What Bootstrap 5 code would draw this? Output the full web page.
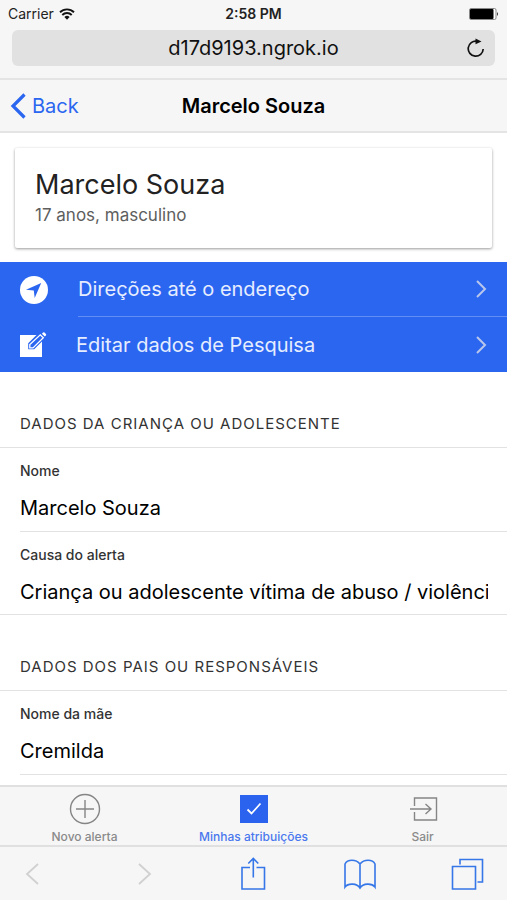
<!DOCTYPE html>
<html lang="pt-BR">
<head>
<meta charset="utf-8">
<meta name="viewport" content="width=device-width, initial-scale=1">
<title>Marcelo Souza</title>
<link href="https://cdn.jsdelivr.net/npm/bootstrap@5.3.0/dist/css/bootstrap.min.css" rel="stylesheet">
<style>
  :root { --brand: #2b66f0; --chrome: #f6f6f6; --hairline: #e2e2e2; }
  body { font-family: Inter, "Liberation Sans", sans-serif; color: #111; }
  svg { display: block; flex: none; }
  button { font-family: inherit; }
  .chrome { background: var(--chrome); }
  .status { height: 28px; font-size: 14px; line-height: 28px; padding: 0 8px; color: #222; }
  .address { height: 36px; background: #e1e1e1; border-radius: 6px; font-size: 20px; line-height: 36px; margin: 2px 12px 12px; padding: 0 10px; }
  .page-head { height: 55px; border-top: 2px solid #e4e4e4; border-bottom: 2px solid #e4e4e4; padding: 0 10px; }
  .page-head h1 { font-size: 20px; line-height: 24px; color: #000; }
  .back { color: var(--brand); font-size: 20px; line-height: 24px; gap: 6px; }
  .profile { margin: 15px 15px 14px; padding: 20px; height: 100px; border-radius: 2px; box-shadow: 0 1px 3px rgba(0, 0, 0, .4); }
  .profile h2 { font-size: 27px; line-height: 34px; color: #222; }
  .profile p { font-size: 17px; line-height: 26px; color: #5e5e5e; }
  .actions { background: var(--brand); }
  .actions a { color: #e6edff; font-size: 20px; padding-left: 20px; height: 55px; }
  .actions .glyph { width: 58px; }
  .actions .edit .glyph { width: 56px; }
  .actions .text { padding-right: 20px; }
  .actions .ruled { border-bottom: 1px solid #628df5; }
  .group-title { height: 75px; padding: 40px 20px 0; font-size: 15px; line-height: 24px; letter-spacing: 1px; color: #333; }
  .fields { border-top: 1px solid var(--hairline); border-bottom: 1px solid var(--hairline); padding-left: 20px; }
  .field { height: 83px; padding: 13px 19px 0 0; }
  .field + .field { border-top: 1px solid var(--hairline); }
  .field label { font-size: 14px; line-height: 20px; font-weight: 500; color: #333; }
  .field input { font-size: 20px; line-height: 30px; height: 30px; margin-top: 12px; color: #000; outline: 0; }
  .open-end { border-bottom: 0; }
  .open-end .field { border-bottom: 1px solid var(--hairline); height: 84px; }
  .tabs { height: 60px; border-top: 2px solid #e0e0e0; }
  .tabs a { color: #8a8a8a; font-size: 12px; line-height: 16px; font-weight: 500; padding-top: 6px; gap: 4px; }
  .tabs a.active { color: #4a78ee; }
  .tools { height: 55px; border-top: 2px solid #e0e0e0; padding: 0 22px 0 16px; }
  .tools button { color: #3576e8; }
  .tools button:disabled { color: #bdbdbd; }
</style>
</head>
<body class="vh-100 d-flex flex-column overflow-hidden bg-white">
<header class="chrome">
  <div class="status row g-0">
    <div class="col d-flex align-items-center gap-1">
      <span>Carrier</span>
      <svg width="18" height="14" viewBox="0 0 18 14" fill="none" stroke="#111" stroke-width="1.900" aria-hidden="true"><path d="M2 5.200a10 10 0 0 1 14 0M4.300 8a6.600 6.600 0 0 1 9.400 0"/><path d="M6.400 10a3.700 3.700 0 0 1 5.200 0L9 12.700z" fill="#111" stroke="none"/></svg>
    </div>
    <div class="col text-center fw-semibold">2:58 PM</div>
    <div class="col d-flex align-items-center justify-content-end">
      <svg width="30" height="14" viewBox="0 0 30 14" aria-hidden="true"><rect x=".5" y="1.500" width="26.500" height="11" rx="1.500" fill="#fff" stroke="#888"/><rect x="1" y="2" width="23.500" height="10" rx="1"/><path d="M28 5q2 2 0 4z" fill="#333"/></svg>
    </div>
  </div>
  <div class="address row g-0">
    <span class="col-8 offset-2 text-center">d17d9193.ngrok.io</span>
    <div class="col-2 d-flex align-items-center justify-content-end">
      <button type="button" class="btn p-0 border-0" aria-label="Recarregar">
        <svg width="18" height="20" viewBox="0 0 18 20" fill="none" stroke="#111" stroke-width="1.700"><path d="M10 3.300A7.500 7.500 0 1 0 16.200 11"/><path d="M8.500.6v5.600l6-2.600z" fill="#111" stroke="none"/></svg>
      </button>
    </div>
  </div>
  <div class="page-head row g-0 align-items-center">
    <div class="col-3 d-flex"><a class="back d-flex align-items-center text-decoration-none" href="#"><svg width="16" height="26" viewBox="0 0 16 26" fill="none" stroke="currentColor" stroke-width="3.200"><path d="M14.500 1.500 3 13l11.500 11.500"/></svg>Back</a></div>
    <h1 class="col-6 text-center fw-semibold mb-0">Marcelo Souza</h1>
  </div>
</header>

<main class="flex-grow-1 overflow-hidden">
  <section class="profile bg-white">
    <h2 class="fw-normal mb-0">Marcelo Souza</h2>
    <p class="mb-0">17 anos, masculino</p>
  </section>

  <nav class="actions">
    <a class="d-flex text-decoration-none" href="#">
      <span class="glyph d-flex align-items-center"><svg width="28" height="28" viewBox="0 0 28 28"><circle cx="14" cy="14" r="14" fill="#fff"/><path d="M21.200 7 6 13.800l7.800.8.900 7.400z" fill="#2b66f0"/></svg></span>
      <span class="text ruled flex-grow-1 d-flex align-items-center justify-content-between">Direções até o endereço
        <svg width="12" height="18" viewBox="0 0 12 18" fill="none" stroke="#b9c6ec" stroke-width="2"><path d="m2 1 8 8-8 8"/></svg></span>
    </a>
    <a class="edit d-flex text-decoration-none" href="#">
      <span class="glyph d-flex align-items-center"><svg width="28" height="26" viewBox="0 0 28 26"><path d="M0 3h16.500L8.200 11.200V17.300h6L22 9.500V25H0z" fill="#fff"/><path d="M9.500 12 20.600 1.500l4.200 4.200L13.800 16.400H9.500z" fill="#2b66f0"/><path d="M9.800 15.900v-3.400L20.300 2.800l3 3L13 15.900z" fill="#2b66f0" stroke="#fff" stroke-width="1.300"/><path d="m21.900 1.700 1.200-1.100q.7-.6 1.400 0l1.400 1.400q.7.700 0 1.400l-1.100 1.200z" fill="#fff"/></svg></span>
      <span class="text flex-grow-1 d-flex align-items-center justify-content-between">Editar dados de Pesquisa
        <svg width="12" height="18" viewBox="0 0 12 18" fill="none" stroke="#b9c6ec" stroke-width="2"><path d="m2 1 8 8-8 8"/></svg></span>
    </a>
  </nav>

  <section>
    <h3 class="group-title fw-normal mb-0">DADOS DA CRIANÇA OU ADOLESCENTE</h3>
    <div class="fields">
      <div class="field"><label class="d-block" for="nome">Nome</label><input class="form-control-plaintext p-0" id="nome" readonly value="Marcelo Souza"></div>
      <div class="field"><label class="d-block" for="causa">Causa do alerta</label><input class="form-control-plaintext p-0" id="causa" readonly value="Criança ou adolescente vítima de abuso / violência"></div>
    </div>
  </section>

  <section>
    <h3 class="group-title fw-normal mb-0">DADOS DOS PAIS OU RESPONSÁVEIS</h3>
    <div class="fields open-end">
      <div class="field"><label class="d-block" for="mae">Nome da mãe</label><input class="form-control-plaintext p-0" id="mae" readonly value="Cremilda"></div>
    </div>
  </section>
</main>

<footer class="chrome">
  <nav class="tabs row g-0">
    <a class="col d-flex flex-column align-items-center text-decoration-none" href="#"><svg width="32" height="32" viewBox="0 0 32 32" fill="none" stroke="#858585" stroke-width="1.400"><circle cx="16" cy="16" r="14.500"/><path d="M16 7v18M7 16h18"/></svg>Novo alerta</a>
    <a class="active col d-flex flex-column align-items-center text-decoration-none" href="#" aria-current="page"><svg width="32" height="32" viewBox="0 0 32 32"><path d="M2 2h28v28H2z" fill="#2b62ee"/><path d="m9.500 16.500 4 4 9-10" fill="none" stroke="#fff" stroke-width="1.800"/></svg>Minhas atribuições</a>
    <a class="col d-flex flex-column align-items-center text-decoration-none" href="#"><svg width="32" height="32" viewBox="0 0 32 32" fill="none" stroke="#858585" stroke-width="1.400"><path d="M7.500 13V5h22v22h-22v-8M3 16h21M18.500 11l5.500 5-5.500 5"/></svg>Sair</a>
  </nav>
  <div class="tools d-flex align-items-center justify-content-between">
    <button type="button" class="btn p-0 border-0" disabled aria-label="Voltar"><svg width="34" height="24" viewBox="0 0 34 24" fill="none" stroke="currentColor" stroke-width="1.800"><path d="M22 2 11 12l11 10"/></svg></button>
    <button type="button" class="btn p-0 border-0" disabled aria-label="Avançar"><svg width="34" height="24" viewBox="0 0 34 24" fill="none" stroke="currentColor" stroke-width="1.800"><path d="m14 2 11 10-11 10"/></svg></button>
    <button type="button" class="btn p-0 border-0" aria-label="Compartilhar"><svg width="34" height="34" viewBox="0 0 34 34" fill="none" stroke="currentColor" stroke-width="1.600"><path d="M16 10.500H8v21.500h22.500v-21.500h-8M19.300 20.500V1.500M14.300 6.500l5-5 5 5"/></svg></button>
    <button type="button" class="btn p-0 border-0" aria-label="Favoritos"><svg width="34" height="32" viewBox="0 0 34 32" fill="none" stroke="currentColor" stroke-width="1.600"><path d="M18 6C14 1 5.500 1 3 6v23c3-4 12-4 15 1 3-5 12-5 15-1V6C30.500 1 22 1 18 6v24"/></svg></button>
    <button type="button" class="btn p-0 border-0" aria-label="Abas"><svg width="34" height="34" viewBox="0 0 34 34" fill="none" stroke="currentColor" stroke-width="1.600"><path d="M1.500 9.500h23v22.500h-23z"/><path d="M9 7.500V2.500h22.500v22.500h-5"/></svg></button>
  </div>
</footer>
<script src="https://cdn.jsdelivr.net/npm/bootstrap@5.3.0/dist/js/bootstrap.bundle.min.js"></script>
</body>
</html>
